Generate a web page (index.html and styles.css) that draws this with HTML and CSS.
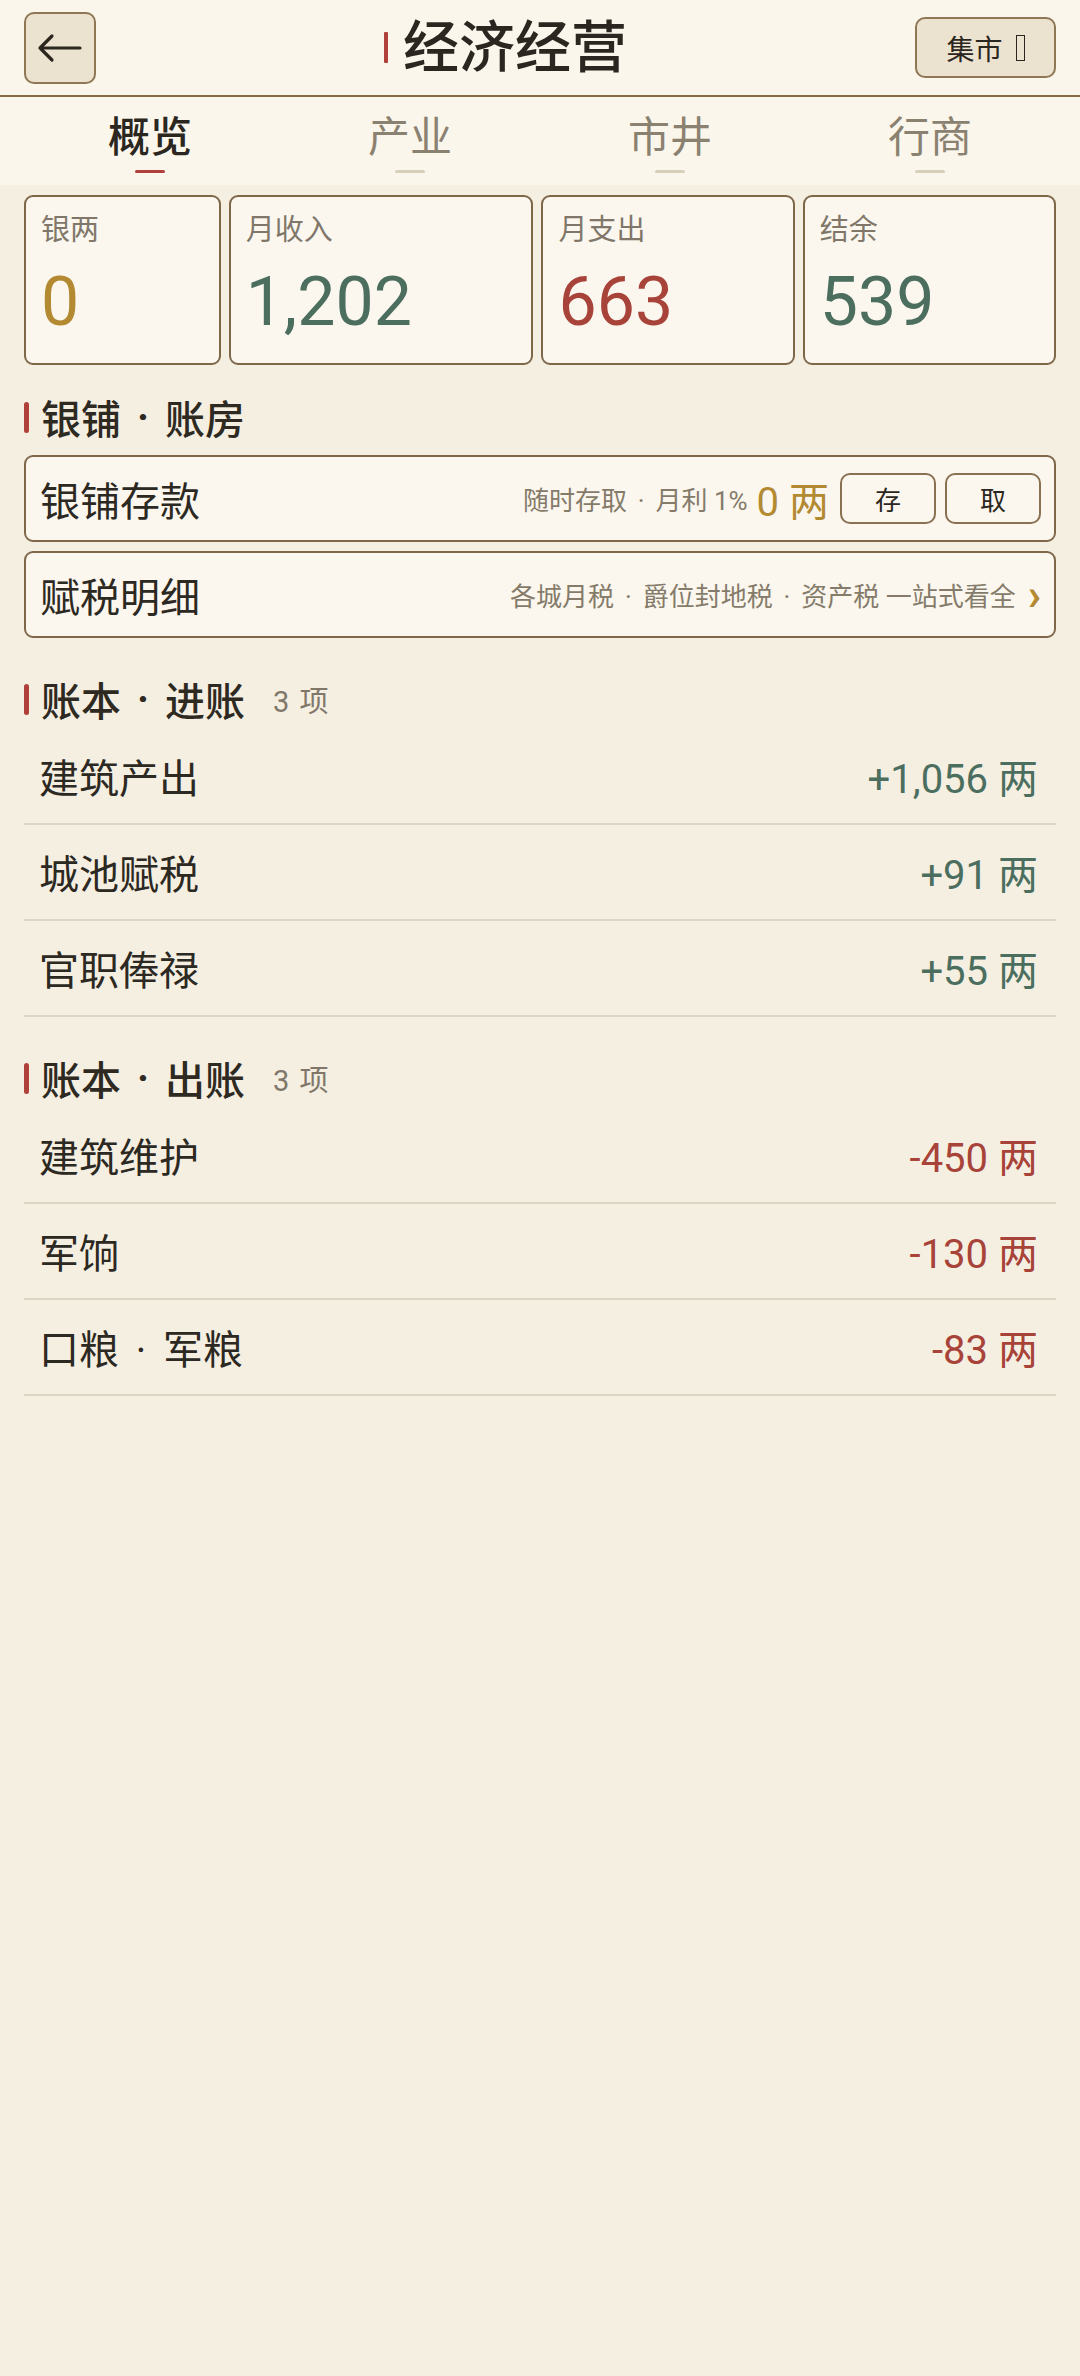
FILE: index.html
```html
<!DOCTYPE html>
<html lang="zh-CN">
<head>
<meta charset="utf-8">
<meta name="viewport" content="width=1080">
<title>经济经营</title>
<link rel="stylesheet" href="styles.css">
</head>
<body>
<div class="app">
  <header class="topbar">
    <button class="back" aria-label="返回">
      <svg width="46" height="30" viewBox="0 0 46 30" aria-hidden="true">
        <path d="M3 15 H43 M3 15 L15 3 M3 15 L15 27" fill="none" stroke="#2b2620" stroke-width="3.2" stroke-linecap="round" stroke-linejoin="round"/>
      </svg>
    </button>
    <h1 class="title"><span class="title-bar"></span>经济经营</h1>
    <button class="market">集市<span class="tofu"></span></button>
  </header>

  <nav class="tabs">
    <div class="tab active"><span class="tab-text">概览</span><span class="tab-line"></span></div>
    <div class="tab"><span class="tab-text">产业</span><span class="tab-line"></span></div>
    <div class="tab"><span class="tab-text">市井</span><span class="tab-line"></span></div>
    <div class="tab"><span class="tab-text">行商</span><span class="tab-line"></span></div>
  </nav>

  <main class="content">
    <div class="stats">
      <div class="stat"><div class="stat-label">银两</div><div class="stat-value gold">0</div></div>
      <div class="stat"><div class="stat-label">月收入</div><div class="stat-value green">1,202</div></div>
      <div class="stat"><div class="stat-label">月支出</div><div class="stat-value red">663</div></div>
      <div class="stat"><div class="stat-label">结余</div><div class="stat-value green">539</div></div>
    </div>

    <section class="section first">
      <h2 class="sec-head"><span class="sec-bar"></span>银铺<span class="sep bold">·</span>账房</h2>
      <div class="panel panel-first">
        <span class="panel-title">银铺存款</span>
        <span class="hint">随时存取<span class="sep">·</span>月利 1%</span>
        <span class="amount gold">0 两</span>
        <div class="btns">
          <button class="btn">存</button>
          <button class="btn">取</button>
        </div>
      </div>
      <div class="panel">
        <span class="panel-title">赋税明细</span>
        <span class="hint">各城月税<span class="sep">·</span>爵位封地税<span class="sep">·</span>资产税 一站式看全</span>
        <span class="chev">›</span>
      </div>
    </section>

    <section class="section">
      <h2 class="sec-head"><span class="sec-bar"></span>账本<span class="sep bold">·</span>进账<span class="count">3 项</span></h2>
      <ul class="rows">
        <li class="row"><span class="row-label">建筑产出</span><span class="row-value green">+1,056 两</span></li>
        <li class="row"><span class="row-label">城池赋税</span><span class="row-value green">+91 两</span></li>
        <li class="row"><span class="row-label">官职俸禄</span><span class="row-value green">+55 两</span></li>
      </ul>
    </section>

    <section class="section">
      <h2 class="sec-head"><span class="sec-bar"></span>账本<span class="sep bold">·</span>出账<span class="count">3 项</span></h2>
      <ul class="rows">
        <li class="row"><span class="row-label">建筑维护</span><span class="row-value red">-450 两</span></li>
        <li class="row"><span class="row-label">军饷</span><span class="row-value red">-130 两</span></li>
        <li class="row"><span class="row-label">口粮<span class="sep">·</span>军粮</span><span class="row-value red">-83 两</span></li>
      </ul>
    </section>
  </main>
</div>
</body>
</html>
```

FILE: styles.css
```css
* { box-sizing: border-box; }

html, body {
  margin: 0;
  padding: 0;
}

body {
  background: #f5efe2;
  font-family: Roboto, "Noto Sans CJK SC", sans-serif;
  color: #2c2822;
  width: 1080px;
  min-height: 2376px;
}

.app {
  width: 1080px;
}

/* ---------- top bar ---------- */
.topbar {
  display: flex;
  align-items: center;
  height: 97px;
  padding: 0 24px;
  background: #faf6eb;
  border-bottom: 2px solid #8a6b47;
}

.back {
  width: 72px;
  height: 72px;
  flex: none;
  display: flex;
  align-items: center;
  justify-content: center;
  padding: 0;
  background: #ebe3cf;
  border: 2px solid #8f7655;
  border-radius: 10px;
}

.title {
  flex: 1;
  margin: 0;
  display: flex;
  align-items: center;
  justify-content: center;
  font-size: 56px;
  line-height: 64px;
  font-weight: 500;
  color: #2b2620;
}

.title-bar {
  width: 4px;
  height: 31px;
  background: #b0413a;
  border-radius: 1px;
  margin-right: 15px;
}

.market {
  width: 141px;
  height: 61px;
  flex: none;
  display: flex;
  align-items: center;
  justify-content: center;
  padding: 0;
  background: #ebe3cf;
  border: 2px solid #8f7655;
  border-radius: 10px;
  font-family: Roboto, "Noto Sans CJK SC", sans-serif;
  font-size: 28px;
  color: #2b2620;
}

.tofu {
  display: inline-block;
  width: 9px;
  height: 26px;
  margin-left: 13px;
  border: 1.5px solid #2b2620;
}

/* ---------- tabs ---------- */
.tabs {
  display: flex;
  padding: 0 20px;
  background: #faf6eb;
}

.tab {
  flex: 1;
  display: flex;
  flex-direction: column;
  align-items: center;
  padding: 18px 0 12px;
}

.tab-text {
  font-size: 42px;
  line-height: 46px;
  color: #8b8170;
}

.tab.active .tab-text {
  color: #2b2620;
  font-weight: 500;
}

.tab-line {
  width: 30px;
  height: 3px;
  margin-top: 9px;
  border-radius: 2px;
  background: #d8cfba;
}

.tab.active .tab-line {
  background: #b0413a;
}

/* ---------- content ---------- */
.content {
  padding: 0 24px 40px;
}

.stats {
  display: flex;
  gap: 8px;
  margin-top: 10px;
}

.stat {
  flex: 1 1 auto;
  background: #fbf7ee;
  border: 2px solid #7f6749;
  border-radius: 9px;
  padding: 16px 15px 25px;
}

.stat-label {
  font-size: 29px;
  line-height: 34px;
  color: #80776a;
  white-space: nowrap;
}

.stat-value {
  font-size: 68px;
  line-height: 72px;
  margin-top: 19px;
  white-space: nowrap;
}

.gold { color: #b38a32; }
.green { color: #4b6e5e; }
.red { color: #a8433a; }

.section {
  margin-top: 37px;
}

.section.first {
  margin-top: 28px;
}

.sec-head {
  display: flex;
  align-items: center;
  height: 48px;
  margin: 0;
  font-size: 40px;
  font-weight: 500;
  color: #2e2a22;
}

.sec-bar {
  width: 5px;
  height: 31px;
  border-radius: 3px;
  background: #b0413a;
  margin-right: 12px;
}

.sep {
  display: inline-block;
  width: 1.1em;
  text-align: center;
}

.sep.bold {
  font-weight: 700;
}

.count {
  margin-left: 28px;
  font-size: 29px;
  font-weight: 400;
  word-spacing: 3px;
  color: #80776a;
}

/* ---------- panels ---------- */
.panel {
  display: flex;
  align-items: center;
  height: 87px;
  margin-top: 9px;
  padding: 0 13px 0 14px;
  background: #fbf7ee;
  border: 2px solid #7f6749;
  border-radius: 9px;
}

.panel-first {
  margin-top: 14px;
}

.panel-title {
  flex: 1;
  font-size: 40px;
  color: #2c2822;
  white-space: nowrap;
}

.hint {
  font-size: 26px;
  color: #857b6a;
  white-space: nowrap;
}

.amount {
  margin-left: 9px;
  font-size: 40px;
  white-space: nowrap;
}

.btns {
  display: flex;
  gap: 9px;
  margin-left: 11px;
}

.btn {
  width: 96px;
  height: 51px;
  display: flex;
  align-items: center;
  justify-content: center;
  padding: 0;
  background: transparent;
  border: 2px solid #8a7152;
  border-radius: 10px;
  font-family: Roboto, "Noto Sans CJK SC", sans-serif;
  font-size: 26px;
  color: #2b2620;
}

.chev {
  margin-left: 12px;
  font-size: 44px;
  line-height: 44px;
  font-weight: 700;
  color: #b38a32;
}

/* ---------- rows ---------- */
.rows {
  list-style: none;
  margin: 6px 0 0;
  padding: 0;
}

.row {
  display: flex;
  justify-content: space-between;
  align-items: center;
  padding: 29px 18px 21px 15px;
  line-height: 44px;
  border-bottom: 2px solid #ddd5c3;
}

.row-label {
  font-size: 40px;
  color: #2c2822;
}

.row-value {
  font-size: 40px;
}
```
